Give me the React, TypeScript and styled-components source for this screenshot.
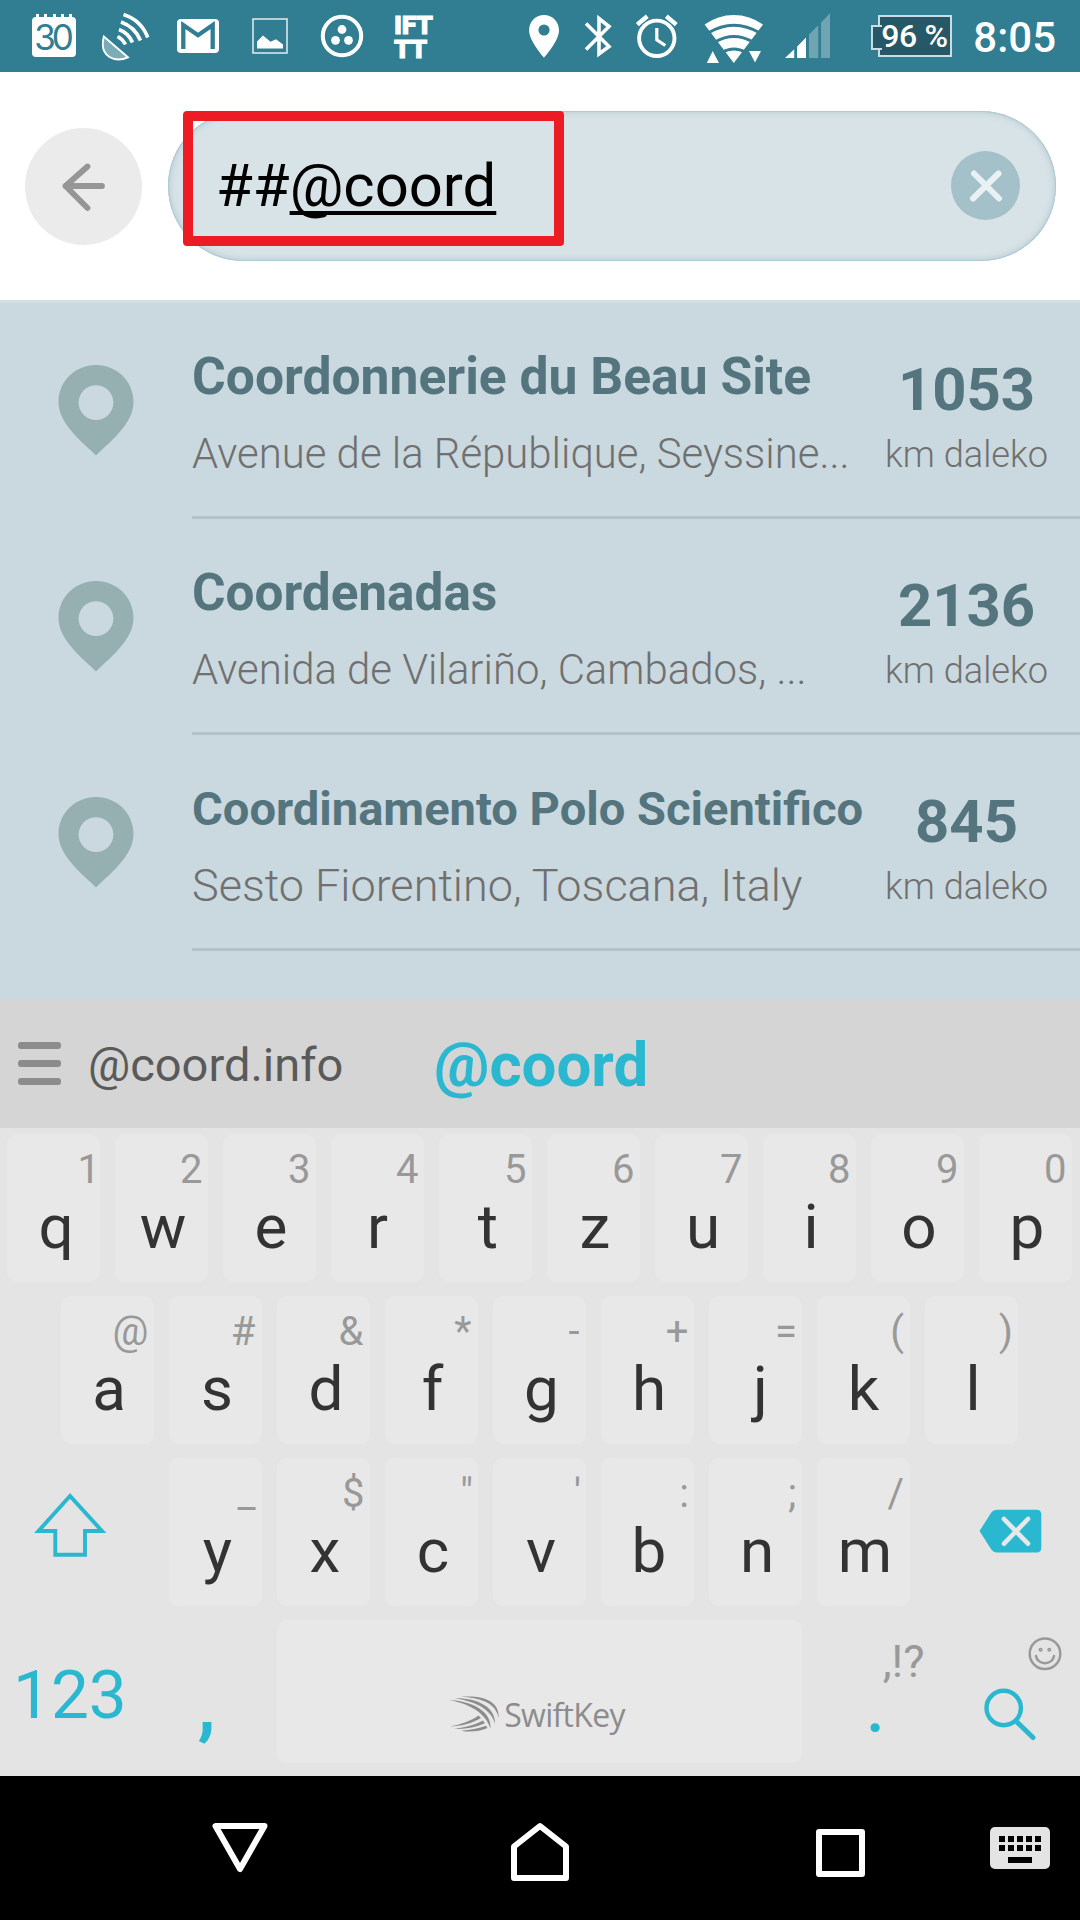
import React from "react";
import styled, { createGlobalStyle } from "styled-components";

const GlobalStyle = createGlobalStyle`
  * { box-sizing: border-box; }
  body { margin: 0; background: #000; }
`;

const ACCENT = "#2ab8d1";

const Screen = styled.div`
  width: 1080px;
  height: 1920px;
  display: flex;
  flex-direction: column;
  overflow: hidden;
  background: #fff;
  font-family: Roboto, "Liberation Sans", sans-serif;
`;

/* ---------- status bar ---------- */

const StatusBar = styled.header`
  height: 72px;
  flex: none;
  display: flex;
  align-items: flex-start;
  padding-right: 24px;
  background: #317d91;
  color: #fff;
`;

const StatusIcon = styled.svg<{ $left: number; $top?: number }>`
  flex: none;
  display: block;
  margin-left: ${(p) => p.$left}px;
  margin-top: ${(p) => p.$top ?? 12}px;
`;

const CalendarBadge = styled.div`
  position: relative;
  flex: none;
  width: 44px;
  height: 40px;
  margin: 17px 0 0 32px;
  border-radius: 4px;
  background: #fff;
  color: #317d91;
  font-family: Inter, sans-serif;
  font-size: 35px;
  font-weight: 400;
  line-height: 41px;
  text-align: center;
  letter-spacing: -4px;
  text-indent: -4px;
`;

const CalendarRings = styled.div`
  position: absolute;
  top: -3px;
  left: 4px;
  right: 4px;
  display: flex;
  justify-content: space-between;

  i {
    width: 3px;
    height: 4px;
    background: #fff;
  }
`;

const Ifttt = styled.div`
  flex: none;
  width: 44px;
  margin: 13px 0 0 30px;
  font-family: Roboto, sans-serif;
  font-size: 26.5px;
  font-weight: 900;
  line-height: 24px;
  letter-spacing: -0.3px;
  white-space: pre-line;
  -webkit-text-stroke: 0.9px #fff;
`;

const Battery = styled.div`
  position: relative;
  flex: none;
  width: 74px;
  height: 42px;
  margin: 15px 0 0 46px;
  border: 2px solid #c9dde2;
  background: #265867;
  font-size: 32px;
  font-weight: 500;
  line-height: 39px;
  text-align: center;
  white-space: pre;
  letter-spacing: -0.3px;

  &::before {
    content: "";
    position: absolute;
    left: -9px;
    top: 8px;
    width: 9px;
    height: 21px;
    border: 2px solid #c9dde2;
    border-right: 0;
    background: #265867;
  }
`;

const BatteryLabel = styled.span`
  position: relative;
  margin-left: -1px;
`;

const Clock = styled.time`
  margin-left: auto;
  padding-top: 13px;
  font-size: 42px;
  font-weight: 500;
  line-height: 50px;
`;

function StatusIcons() {
  return (
    <StatusBar>
      <CalendarBadge>
        <CalendarRings><i /><i /><i /><i /><i /></CalendarRings>
        30
      </CalendarBadge>
      <StatusIcon $left={25} width={50} height={50} viewBox="101 12 50 50" fill="none" stroke="#fff">
        <path d="M103.800 36.500L128 57.300C116 62.500 98.500 58 103.800 36.500Z" fill="rgba(255,255,255,.36)" strokeWidth="1.800" />
        <g strokeWidth="3.600">
          <path d="M123.500 14.500Q141 20 147.800 37.500" />
          <path d="M121 22Q135 27 140.500 40.500" />
          <path d="M119 29.500Q128.500 33 132.500 42.500" />
          <path d="M117.500 36.500Q122.500 39 125.500 44.500" />
        </g>
      </StatusIcon>
      <StatusIcon $left={26} $top={19} width={42} height={34} viewBox="0 0 42 34">
        <rect width="42" height="34" rx="4" fill="#fff" />
        <path d="M6.300 30V6L21 16.200L35.700 6V30" fill="none" stroke="#317d91" strokeWidth="4.300" />
      </StatusIcon>
      <StatusIcon $left={33} $top={18} width={36} height={36} viewBox="0 0 36 36">
        <rect x="1" y="1" width="34" height="34" fill="none" stroke="#d8e8ec" strokeWidth="1.600" />
        <path d="M5 30.500V23.500L11 17.500L18.500 23.800L24 21.300L31 26.500V30.500Z" fill="#fff" />
      </StatusIcon>
      <StatusIcon $left={32} $top={14} width={44} height={44} viewBox="0 0 44 44" fill="#fff">
        <circle cx="22" cy="22" r="19.200" fill="none" stroke="#fff" strokeWidth="4" />
        <circle cx="22" cy="15.500" r="4.400" />
        <circle cx="15.500" cy="26.300" r="4.400" />
        <circle cx="28.500" cy="26.300" r="4.400" />
      </StatusIcon>
      <Ifttt>{"IFT\nTT"}</Ifttt>

      <StatusIcon $left={91} width={30} height={48} viewBox="529.500 12 30 48">
        <path fillRule="evenodd" fill="#fff" d="M544.500 15C536 15 529.600 21.700 529.600 30.500C529.600 41 544.500 57.700 544.500 57.700S559.500 41 559.500 30.500C559.500 21.700 553 15 544.500 15ZM544.500 35.600A5.600 5.600 0 1 1 544.500 24.400A5.600 5.600 0 0 1 544.500 35.600Z" />
      </StatusIcon>
      <StatusIcon $left={25} width={28} height={48} viewBox="584 12 28 48" fill="none" stroke="#fff" strokeWidth="3.600">
        <path d="M586 23.500L609 46.500L599 54V18.500L609 26.500L586 49.500" />
      </StatusIcon>
      <StatusIcon $left={24} width={42} height={48} viewBox="636.500 12 42 48" fill="none" stroke="#fff">
        <circle cx="657.300" cy="38.300" r="17.700" strokeWidth="3.900" />
        <path d="M657.300 28V39.800L665.800 45.500" strokeWidth="3.200" />
        <path d="M637.800 24.600L647.800 16.300M676.800 24.600L666.800 16.300" strokeWidth="4.400" />
      </StatusIcon>
      <StatusIcon $left={26} width={60} height={54} viewBox="704 12 60 54">
        <path d="M733.800 63L704.600 24.500Q718 15 733.800 15T763 24.500Z" fill="#fff" />
        <g fill="none" stroke="#317d91" strokeWidth="3">
          <path d="M708 33Q733.800 17.500 760 33" />
          <path d="M715 42Q733.800 31 753 42" />
          <path d="M722 52.500Q733.800 45.500 746 52.500" />
        </g>
        <path d="M706.800 63L712.700 51L719 63ZM749 51H761L755 62.500Z" fill="#fff" />
      </StatusIcon>
      <StatusIcon $left={20} width={48} height={48} viewBox="784 14 48 48">
        <path d="M785 60L794.200 51.300V60ZM797 60V48.700L806 39.500V60Z" fill="#fff" />
        <path d="M809 60V36.500L818.300 27.200V60ZM821 60V24.500L830 15.200V60Z" fill="#6fa4b2" />
      </StatusIcon>
      <Battery><BatteryLabel>96 %</BatteryLabel></Battery>
      <Clock>8:05</Clock>
    </StatusBar>
  );
}

/* ---------- search header ---------- */

const SearchHeader = styled.div`
  height: 231px;
  flex: none;
  display: flex;
  align-items: flex-start;
  padding: 39px 24px 0 26px;
  border-bottom: 3px solid #d1e0e3;
  background: #fff;
`;

const BackButton = styled.button`
  width: 117px;
  height: 117px;
  margin: 17px 26px 0 -1px;
  padding: 0;
  flex: none;
  border: 0;
  border-radius: 50%;
  background: #ebebeb;

  svg { display: block; }
`;

const SearchField = styled.div`
  position: relative;
  flex: 1;
  height: 150px;
  display: flex;
  align-items: center;
  justify-content: space-between;
  padding: 0 36px 1px 48px;
  border-radius: 75px;
  background: #d8e3e7;
  box-shadow: inset 0 0 0 1px #aecad4, inset 0 0 7px 1px #b3c9d0;
`;

const Query = styled.div`
  font-size: 59.8px;
  line-height: 72px;
  color: #000;
`;

const Composing = styled.span`
  text-decoration: underline;
  text-decoration-thickness: 3.5px;
  text-underline-offset: 5px;
  text-decoration-skip-ink: none;
`;

const ClearButton = styled.button`
  width: 69px;
  height: 69px;
  padding: 0;
  border: 0;
  border-radius: 50%;
  background: #a4c0c8;

  svg { display: block; }
`;

const Highlight = styled.div`
  position: absolute;
  left: 15px;
  top: 0;
  width: 381px;
  height: 135px;
  border: 10px solid #ed1c24;
  border-radius: 4px;
`;

/* ---------- results ---------- */

const Results = styled.main`
  height: 697px;
  flex: none;
  background: #cad8df;
`;

const Result = styled.article`
  display: flex;
  height: 216px;
`;

const Marker = styled.div`
  width: 192px;
  flex: none;
  padding: 62px 0 0 58px;

  svg { display: block; }
`;

const ResultBody = styled.div`
  flex: 1;
  min-width: 0;
  display: flex;
  border-bottom: 3px solid #b2c3c6;
`;

const Place = styled.div`
  width: 676px;
  flex: none;
  padding-top: 41px;
  white-space: nowrap;
`;

const PlaceName = styled.div<{ $size: number }>`
  height: 71px;
  font-size: ${(p) => p.$size}px;
  font-weight: 700;
  line-height: 66px;
  color: #54747e;
`;

const Address = styled.div<{ $size: number }>`
  font-size: ${(p) => p.$size}px;
  font-weight: 300;
  line-height: 78px;
  color: #707070;
`;

const Distance = styled.div`
  width: 197px;
  flex: none;
  padding-top: 51px;
  text-align: center;
  white-space: nowrap;
`;

const Amount = styled.div`
  font-size: 59.8px;
  font-weight: 700;
  line-height: 72px;
  color: #54747e;
`;

const Unit = styled.div`
  font-size: 36.2px;
  font-weight: 300;
  line-height: 57px;
  color: #707070;
`;

const places = [
  { name: "Coordonnerie du Beau Site", size: 51.6, address: "Avenue de la République, Seyssine...", addressSize: 41.9, km: "1053" },
  { name: "Coordenadas", size: 51.3, address: "Avenida de Vilariño, Cambados, ...", addressSize: 41.9, km: "2136" },
  { name: "Coordinamento Polo Scientifico", size: 47.1, address: "Sesto Fiorentino, Toscana, Italy", addressSize: 45, km: "845" },
];

/* ---------- suggestions ---------- */

const Suggestions = styled.div`
  height: 128px;
  flex: none;
  display: flex;
  align-items: center;
  padding: 0 0 1px 18px;
  background: #d5d5d5;
`;

const MenuBars = styled.div`
  width: 43px;
  display: flex;
  flex-direction: column;
  gap: 11px;

  i {
    height: 7px;
    border-radius: 3px;
    background: #8c8c8c;
  }
`;

const Suggestion = styled.span<{ $primary?: boolean }>`
  width: ${(p) => (p.$primary ? 240 : 346)}px;
  margin-left: ${(p) => (p.$primary ? 0 : 27)}px;
  padding-top: 2px;
  font-size: ${(p) => (p.$primary ? 61.8 : 47)}px;
  font-weight: ${(p) => (p.$primary ? 700 : 400)};
  line-height: 76px;
  color: ${(p) => (p.$primary ? ACCENT : "#5a5a5a")};
`;

/* ---------- keyboard ---------- */

const Keyboard = styled.section`
  height: 648px;
  flex: none;
  background: #e4e4e4;
`;

const KeyRow = styled.div<{ $inset?: number }>`
  height: 162px;
  display: flex;
  padding: 6px ${(p) => p.$inset ?? 0}px 0;
`;

const Key = styled.div`
  width: 93px;
  height: 148px;
  flex: none;
  display: flex;
  flex-direction: column;
  align-items: center;
  margin: 0 8px 0 7px;
  padding-top: 11px;
  border-radius: 10px;
  background: #e8e8e8;
`;

const Hint = styled.span<{ $bearing: number }>`
  align-self: flex-end;
  margin-right: ${(p) => 5.5 - p.$bearing}px;
  font-size: 40px;
  line-height: 50px;
  color: #999;
`;

const Letter = styled.span<{ $bearing: number }>`
  margin-left: ${(p) => 3 + 2 * p.$bearing}px;
  font-size: 62px;
  line-height: 64px;
  color: #333;
`;

/* Side-bearing corrections that centre a letter's ink and right-align a hint's ink. */
const letterBearing: Record<string, number> = { q: 1, r: -1.5, t: 1, d: 1, f: -0.5, g: 0.5, j: 3.5, k: -1.5, y: 0.5 };
const hintBearing: Record<string, number> = { "1": 5.5, "#": -1, "&": -1, "*": -1, "-": -1, "_": -1, "=": 0.5, "(": -0.5, ")": 0.5, "\"": 0.5, "'": 0.5, ":": 0.5, ";": 0, "/": -0.5 };

const SideKey = styled.div<{ $width: number }>`
  width: ${(p) => p.$width}px;
  height: 156px;
  flex: none;

  svg { display: block; }
`;

const ModeLabel = styled.div`
  padding: 34px 0 0 13px;
  font-size: 67.5px;
  line-height: 82px;
  color: ${ACCENT};
`;

const CommaLabel = styled.div`
  padding: 48px 0 0 1px;
  text-align: center;
  font-size: 74px;
  font-weight: 700;
  line-height: 76px;
  color: ${ACCENT};
`;

const PeriodKey = styled(SideKey)`
  display: flex;
  flex-direction: column;
  padding-top: 15px;
`;

const PeriodHint = styled.div`
  align-self: flex-end;
  padding-right: 14.5px;
  font-size: 45px;
  line-height: 54px;
  color: #999;
`;

const PeriodLabel = styled.div`
  padding-left: 2px;
  font-size: 82px;
  line-height: 30px;
  text-align: center;
  color: ${ACCENT};
`;

const SpaceKey = styled.div`
  width: 525px;
  height: 143px;
  flex: none;
  display: flex;
  align-items: flex-start;
  justify-content: center;
  gap: 5px;
  margin: 0 8px 0 7px;
  padding: 76px 5px 0 0;
  border-radius: 10px;
  background: #e8e8e8;
`;

const Brand = styled.span`
  font-family: "Open Sans", "Noto Sans", sans-serif;
  font-size: 32px;
  line-height: 38px;
  letter-spacing: -0.7px;
  color: #8c8c8c;
`;

const rows: [string, string][][] = [
  [["q", "1"], ["w", "2"], ["e", "3"], ["r", "4"], ["t", "5"], ["z", "6"], ["u", "7"], ["i", "8"], ["o", "9"], ["p", "0"]],
  [["a", "@"], ["s", "#"], ["d", "&"], ["f", "*"], ["g", "-"], ["h", "+"], ["j", "="], ["k", "("], ["l", ")"]],
  [["y", "_"], ["x", "$"], ["c", "\""], ["v", "'"], ["b", ":"], ["n", ";"], ["m", "/"]],
];

const Keys = ({ keys }: { keys: [string, string][] }) => (
  <>
    {keys.map(([letter, hint]) => (
      <Key key={letter}>
        <Hint $bearing={hintBearing[hint] ?? 0}>{hint}</Hint>
        <Letter $bearing={letterBearing[letter] ?? 0}>{letter}</Letter>
      </Key>
    ))}
  </>
);

/* ---------- navigation bar ---------- */

const NavBar = styled.nav`
  height: 144px;
  flex: none;
  display: flex;
  align-items: flex-start;
  padding-top: 40px;
  background: #000;
`;

const NavIcon = styled.svg<{ $left: number }>`
  display: block;
  flex: none;
  margin-left: ${(p) => p.$left}px;
`;

export default function App() {
  return (
    <Screen>
      <GlobalStyle />
      <StatusIcons />

      <SearchHeader>
        <BackButton aria-label="Back">
          <svg width="117" height="117" viewBox="25 128 117 117" fill="none" stroke="#969696" strokeWidth="5.800" strokeLinecap="round" strokeLinejoin="round">
            <path d="M102 186H65.500M87.500 166.500L65.500 186L87.500 208" />
          </svg>
        </BackButton>
        <SearchField>
          <Query>##<Composing>@coord</Composing></Query>
          <ClearButton aria-label="Clear">
            <svg width="69" height="69" viewBox="951 151 69 69" stroke="#e9f1f4" strokeWidth="6" strokeLinecap="round">
              <path d="M974 173.500L999 198.500M998.500 173.500L973 198.500" />
            </svg>
          </ClearButton>
          <Highlight />
        </SearchField>
      </SearchHeader>

      <Results>
        {places.map((p) => (
          <Result key={p.name}>
            <Marker>
              <svg width="76" height="91" viewBox="0 0 76 91">
                <path fillRule="evenodd" fill="#96afb0" d="M38 0C17 0 .5 16.500 .5 37C.5 60 27 79 38 90.500C49 79 75.500 60 75.500 37C75.500 16.500 59 0 38 0ZM38 55A17.400 17.400 0 1 1 38 20.200A17.400 17.400 0 0 1 38 55Z" />
              </svg>
            </Marker>
            <ResultBody>
              <Place>
                <PlaceName $size={p.size}>{p.name}</PlaceName>
                <Address $size={p.addressSize}>{p.address}</Address>
              </Place>
              <Distance>
                <Amount>{p.km}</Amount>
                <Unit>km daleko</Unit>
              </Distance>
            </ResultBody>
          </Result>
        ))}
      </Results>

      <Suggestions>
        <MenuBars><i /><i /><i /></MenuBars>
        <Suggestion>@coord.info</Suggestion>
        <Suggestion $primary>@coord</Suggestion>
      </Suggestions>

      <Keyboard>
        <KeyRow><Keys keys={rows[0]} /></KeyRow>
        <KeyRow $inset={54}><Keys keys={rows[1]} /></KeyRow>
        <KeyRow>
          <SideKey $width={162}>
            <svg width="162" height="148" viewBox="0 1458 162 148" fill="none" stroke={ACCENT} strokeWidth="3.900">
              <path d="M70 1496L38.500 1531H55.300V1554.700H85V1531H102Z" />
            </svg>
          </SideKey>
          <Keys keys={rows[2]} />
          <SideKey $width={162}>
            <svg width="162" height="148" viewBox="918 1458 162 148">
              <path d="M979.500 1531L991 1513Q993.500 1509.700 997 1509.700H1036.500Q1041.300 1509.700 1041.300 1514.500V1547.800Q1041.300 1552.600 1036.500 1552.600H997Q993.500 1552.600 991 1549Z" fill={ACCENT} />
              <path d="M1004 1519L1028 1543.700M1028 1519L1004 1543.700" stroke="#e8e8e8" strokeWidth="4.600" strokeLinecap="round" />
            </svg>
          </SideKey>
        </KeyRow>
        <KeyRow>
          <SideKey $width={142}><ModeLabel>123</ModeLabel></SideKey>
          <SideKey $width={128}><CommaLabel>,</CommaLabel></SideKey>
          <SpaceKey>
            <svg width="50" height="36" viewBox="0 0 50 36" fill="#8c8c8c">
              <path d="M12 .8C30 -1 51 3 49.500 22C47 6 30 2 12 .8Z" />
              <path d="M5.500 2.300C26 1.500 47 10 46 28C42 12 24 5 5.500 2.300Z" />
              <path d="M.5 4C22 5 43 15 41.500 32.500C36 16 20 8 .5 4Z" />
              <path d="M.5 30.500C12 28.500 22 25 29.500 19.500L32 22C22 28 12 30 .5 30.500Z" />
              <path d="M5 32.800C16 31.500 26 29 34 24.500L36 27.200C26 31.500 16 33.500 5 32.800Z" />
              <path d="M12 34.700C21 34 30 32.500 37 29.700L38.500 32C31 35.500 20 36.500 12 34.700Z" />
            </svg>
            <Brand>SwiftKey</Brand>
          </SpaceKey>
          <PeriodKey $width={129}>
            <PeriodHint>,!?</PeriodHint>
            <PeriodLabel>.</PeriodLabel>
          </PeriodKey>
          <SideKey $width={141}>
            <svg width="141" height="148" viewBox="939 1620 141 148" fill="none" stroke={ACCENT} strokeLinecap="round">
              <circle cx="1003.700" cy="1708" r="17.200" strokeWidth="4.400" />
              <path d="M1016.500 1721.500L1033 1737.500" strokeWidth="5" />
              <g stroke="#999" strokeWidth="2.500">
                <circle cx="1045" cy="1653.800" r="15.300" />
                <path d="M1036 1656C1037.500 1665.500 1052.500 1665.500 1054 1656" />
                <circle cx="1040.600" cy="1649.700" r=".8" />
                <circle cx="1049.300" cy="1649.700" r=".8" />
              </g>
            </svg>
          </SideKey>
        </KeyRow>
      </Keyboard>

      <NavBar>
        <NavIcon $left={206} width={68} height={68} viewBox="206 1816 68 68" fill="none" stroke="#fff" strokeWidth="6" strokeLinejoin="round">
          <path d="M215.500 1826H264.500L240 1869Z" />
        </NavIcon>
        <NavIcon $left={232} width={68} height={68} viewBox="506 1816 68 68" fill="none" stroke="#fff" strokeWidth="6" strokeLinejoin="round">
          <path d="M514 1878V1846.500L540 1826L566 1846.500V1878Z" />
        </NavIcon>
        <NavIcon $left={232} width={68} height={68} viewBox="806 1816 68 68" fill="none" stroke="#fff" strokeWidth="6" strokeLinejoin="round">
          <path d="M819 1832H862V1874H819Z" />
        </NavIcon>
        <NavIcon $left={116} width={60} height={68} viewBox="990 1816 60 68">
          <rect x="990" y="1827" width="60" height="42" rx="5" fill="#e4e4e4" />
          {[0, 1, 2, 3, 4].map((i) => (
            <path key={i} d={`M${999 + i * 9} 1836h6v6h-6zM${999 + i * 9} 1845h6v6h-6z`} />
          ))}
          <rect x="1008" y="1857" width="24" height="6" />
        </NavIcon>
      </NavBar>
    </Screen>
  );
}
